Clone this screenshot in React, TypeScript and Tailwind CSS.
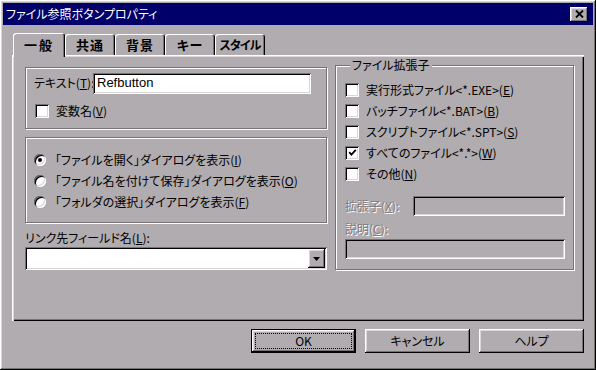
import type { ReactNode } from 'react';

// classic win9x bevels
const raised =
  'shadow-[inset_-1px_-1px_0_#000,inset_1px_1px_0_#fff,inset_-2px_-2px_0_#767276,inset_2px_2px_0_#dad6da]';
const sunken =
  'shadow-[inset_1px_1px_0_#767276,inset_-1px_-1px_0_#fff,inset_2px_2px_0_#000,inset_-2px_-2px_0_#dad6da]';
const etched = 'border border-[#767276] shadow-[1px_1px_0_#fff,inset_1px_1px_0_#fff]';
const disabledText = 'text-[#807c80] [text-shadow:1px_1px_0_#fff]';
const tabEdge = 'shadow-[inset_1px_1px_0_#fff,inset_-1px_0_0_#000,inset_-2px_0_0_#767276]';

function Key({ k }: { k: string }) {
  return (
    <>
      (<u>{k}</u>)
    </>
  );
}

function CheckBox({ checked = false, label }: { checked?: boolean; label: ReactNode }) {
  return (
    <div className="flex items-center h-[21px]">
      <span className={`w-[14px] h-[14px] bg-white shrink-0 flex items-center justify-center ${sunken}`}>
        {checked && (
          <svg width="9" height="9" viewBox="0 0 9 9">
            <path d="M1.2 4.2 L3.4 6.6 L7.8 1.8" stroke="#000" strokeWidth="1.8" fill="none" />
          </svg>
        )}
      </span>
      <span className="ml-[7px] whitespace-nowrap">{label}</span>
    </div>
  );
}

function Radio({ checked = false, label }: { checked?: boolean; label: ReactNode }) {
  return (
    <div className="flex items-center h-[21px]">
      <span className={`w-[12px] h-[12px] rounded-full bg-white shrink-0 flex items-center justify-center ${sunken}`}>
        {checked && <span className="w-[4px] h-[4px] rounded-full bg-black" />}
      </span>
      <span className="ml-[9px] whitespace-nowrap">{label}</span>
    </div>
  );
}

function Button({ label, isDefault = false }: { label: string; isDefault?: boolean }) {
  return (
    <div
      className={`w-[105px] h-[24px] flex items-stretch ${isDefault ? 'border border-black' : ''} ${raised}`}
    >
      <div
        className={`flex-1 flex items-center justify-center ${isDefault ? 'm-[3px] border border-dotted border-black' : ''}`}
      >
        {label}
      </div>
    </div>
  );
}

const tabs = ['共通', '背景', 'キー', 'スタイル'];

export default function App() {
  return (
    <div
      className={`w-[596px] h-[370px] bg-[#b0acb0] p-[3px] flex flex-col text-[12px] leading-[14px] text-black font-['Noto_Sans_CJK_JP',sans-serif] [font-feature-settings:'palt'] ${raised}`}
    >
      {/* title bar */}
      <div className="h-[22px] bg-[#000068] flex items-center justify-between pl-[3px] pr-[5px]">
        <span className="text-white">ファイル参照ボタンプロパティ</span>
        <span className={`w-[18px] h-[15px] bg-[#b0acb0] flex items-center justify-center ${raised}`}>
          <svg width="9" height="8" viewBox="0 0 9 8">
            <path d="M1 0.5 L8 7.5 M8 0.5 L1 7.5" stroke="#000" strokeWidth="1.8" />
          </svg>
        </span>
      </div>

      {/* tabs */}
      <div className="flex items-end h-[23px] mt-[7px] ml-[10px] font-semibold">
        <div
          className={`relative z-10 w-[52px] h-[24px] -mb-[2px] bg-[#b0acb0] rounded-t-[3px] flex items-start justify-center pt-[5px] text-[13px] tracking-[2px] ${tabEdge}`}
        >
          一般
        </div>
        {tabs.map((t) => (
          <div
            key={t}
            className={`w-[50px] h-[21px] rounded-t-[3px] flex items-center justify-center ${
              t === 'スタイル' ? 'text-[12px] tracking-[-1px]' : 'text-[13px] tracking-[1px]'
            } ${tabEdge}`}
          >
            {t}
          </div>
        ))}
      </div>

      {/* tab panel */}
      <div className="mx-[9px] h-[266px] flex pl-[13px] shadow-[inset_1px_1px_0_#fff,inset_2px_2px_0_#dad6da,inset_-1px_-1px_0_#000,inset_-2px_-2px_0_#767276]">
        {/* left column */}
        <div className="w-[302px] pt-[12px] flex flex-col">
          <div className={`h-[62px] pl-[8px] pr-[15px] pt-[4px] ${etched}`}>
            <div className="flex items-center h-[22px]">
              <span className="w-[59px] whitespace-nowrap">
                テキスト<Key k="T" />:
              </span>
              <div
                className={`flex-1 h-[21px] bg-white flex items-center pl-[4px] font-['Liberation_Sans',sans-serif] text-[13px] ${sunken}`}
              >
                Refbutton
              </div>
            </div>
            <div className="mt-[6px] ml-[1px]">
              <CheckBox label={<>変数名<Key k="V" /></>} />
            </div>
          </div>

          <div className={`mt-[8px] h-[86px] pl-[8px] pt-[11px] ${etched}`}>
            <Radio checked label={<>「ファイルを開く」ダイアログを表示<Key k="I" /></>} />
            <Radio label={<>「ファイル名を付けて保存」ダイアログを表示<Key k="O" /></>} />
            <Radio label={<>「フォルダの選択」ダイアログを表示<Key k="F" /></>} />
          </div>

          <div className="mt-[8px] h-[14px] whitespace-nowrap">
            リンク先フィールド名<Key k="L" />:
          </div>
          <div className={`mt-[2px] h-[23px] bg-white flex justify-end items-center pr-[2px] ${sunken}`}>
            <span className={`w-[17px] h-[19px] bg-[#b0acb0] flex items-center justify-center ${raised}`}>
              <svg width="7" height="4" viewBox="0 0 7 4">
                <path d="M0 0 H7 L3.5 4 Z" fill="#000" />
              </svg>
            </span>
          </div>
        </div>

        {/* right column */}
        <fieldset className={`ml-[8px] mt-[3px] w-[239px] h-[212px] pl-[9px] pr-[8px] pt-[7px] ${etched}`}>
          <legend className="ml-[5px] px-[2px] bg-[#b0acb0]">ファイル拡張子</legend>
          <CheckBox label={<>実行形式ファイル&lt;*.EXE&gt;<Key k="E" /></>} />
          <CheckBox label={<>バッチファイル&lt;*.BAT&gt;<Key k="B" /></>} />
          <CheckBox label={<>スクリプトファイル&lt;*.SPT&gt;<Key k="S" /></>} />
          <CheckBox checked label={<>すべてのファイル&lt;*.*&gt;<Key k="W" /></>} />
          <CheckBox label={<>その他<Key k="N" /></>} />

          <div className="mt-[12px] flex items-center h-[20px]">
            <span className={`w-[68px] whitespace-nowrap ${disabledText}`}>
              拡張子<Key k="X" />:
            </span>
            <div className={`flex-1 h-[20px] ${sunken}`} />
          </div>
          <div className={`mt-[6px] h-[14px] whitespace-nowrap ${disabledText}`}>
            説明<Key k="C" />:
          </div>
          <div className={`mt-[3px] h-[20px] ${sunken}`} />
        </fieldset>
      </div>

      {/* buttons */}
      <div className="mt-[8px] flex justify-end gap-[9px] pr-[9px]">
        <Button label="OK" isDefault />
        <Button label="キャンセル" />
        <Button label="ヘルプ" />
      </div>
    </div>
  );
}
